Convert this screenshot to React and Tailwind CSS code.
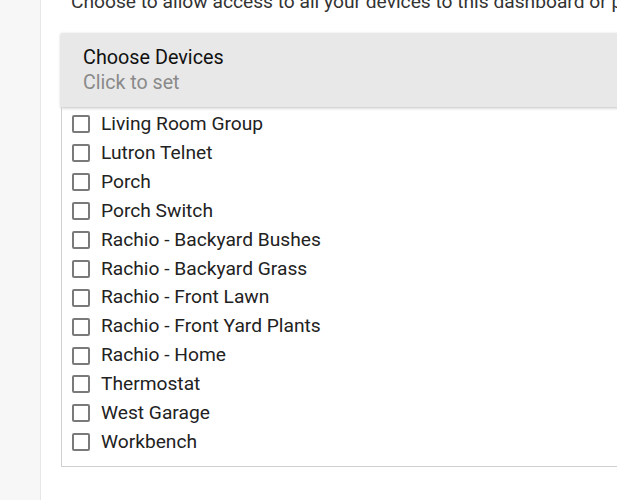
import React from "react";

const devices = [
  "Living Room Group",
  "Lutron Telnet",
  "Porch",
  "Porch Switch",
  "Rachio - Backyard Bushes",
  "Rachio - Backyard Grass",
  "Rachio - Front Lawn",
  "Rachio - Front Yard Plants",
  "Rachio - Home",
  "Thermostat",
  "West Garage",
  "Workbench",
];

export default function App() {
  return (
    <div
      className="flex h-[500px] w-[617px] overflow-hidden bg-white"
      style={{ fontFamily: "Roboto, 'Noto Sans', sans-serif" }}
    >
      <div className="w-[41px] shrink-0 border-r border-[#e6e6e6] bg-[#f7f7f7]" />
      <div className="flex min-w-0 flex-1 flex-col pl-[20px]">
        <p className="-mt-[10px] ml-[10px] whitespace-nowrap text-[19.2px] leading-[24px] text-[#333]">
          Choose to allow access to all your devices to this dashboard or pick specific devices
        </p>
        <div className="mt-[19px] w-[600px]">
          <div className="flex h-[74px] flex-col justify-center bg-[#e8e8e8] pl-[22px] shadow-[0_1px_3px_rgba(0,0,0,0.25)]">
            <div className="text-[19.8px] leading-[25px] text-[#111]">Choose Devices</div>
            <div className="text-[19.6px] leading-[25px] text-[#8a8a8a]">Click to set</div>
          </div>
          <div className="border-b border-l border-[#d0d0d0] pb-[9px] pt-[3px]">
            {devices.map((d) => (
              <label key={d} className="flex h-[28.9px] items-center pl-[10px]">
                <span className="h-[18px] w-[18px] shrink-0 rounded-[2px] border-2 border-[#7a7a7a]" />
                <span className="ml-[11px] text-[19.2px] text-[#222]">{d}</span>
              </label>
            ))}
          </div>
        </div>
      </div>
    </div>
  );
}
